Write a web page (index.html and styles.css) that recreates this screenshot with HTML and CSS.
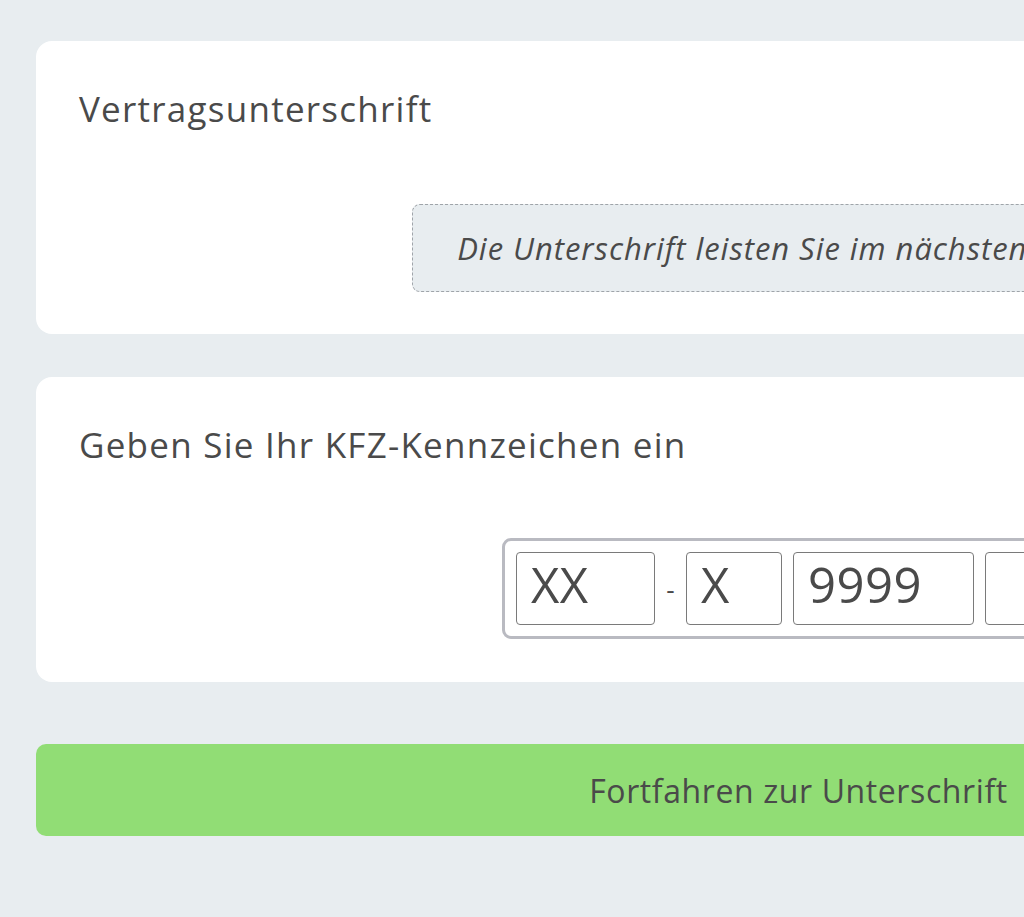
FILE: index.html
```html
<!DOCTYPE html>
<html lang="de">
<head>
    <meta charset="UTF-8">
    <meta name="viewport" content="width=device-width, initial-scale=1.0">
    <title>Vertragsunterschrift</title>
    <link rel="stylesheet" href="styles.css">
</head>
<body>
    <div class="page">
        <div class="card card-signature">
            <h2>Vertragsunterschrift</h2>
            <div class="sign-row">
                <div class="sign-hint">Die Unterschrift leisten Sie im nächsten Schritt.</div>
            </div>
        </div>

        <div class="card card-plate">
            <h2>Geben Sie Ihr KFZ-Kennzeichen ein</h2>
            <div class="plate-row">
                <div class="plate">
                    <input type="text" class="plate-city" placeholder="XX" maxlength="3">
                    <span class="plate-dash">-</span>
                    <input type="text" class="plate-letters" placeholder="X" maxlength="2">
                    <input type="text" class="plate-number" placeholder="9999" maxlength="4">
                    <input type="text" class="plate-suffix" maxlength="1">
                </div>
            </div>
        </div>

        <button type="button" class="continue-btn">Fortfahren zur Unterschrift</button>
    </div>
</body>
</html>
```

FILE: styles.css
```css
html, body {
    margin: 0;
    padding: 0;
    overflow: hidden;
}
body {
    font-family: "Open Sans", "Liberation Sans", sans-serif;
    background-color: #e8edf0;
    color: #4a4a4a;
}
.page {
    width: 1525px;
    margin-left: 36px;
    padding-top: 41px;
}
.card {
    background-color: #fff;
    border-radius: 16px;
    padding: 44px 43px 42px;
    margin-bottom: 43px;
}
.card h2 {
    margin: 0;
    font-size: 35px;
    font-weight: 400;
    line-height: 48px;
    letter-spacing: 1.25px;
}
.sign-row {
    display: flex;
    justify-content: center;
    margin-top: 71px;
}
.sign-hint {
    background-color: #e8edf0;
    border: 1.5px dashed #9fa4a9;
    border-radius: 8px;
    padding: 23px 44px 22px;
    font-size: 31px;
    font-style: italic;
    line-height: 41px;
    letter-spacing: 0.95px;
    white-space: nowrap;
}
.card-plate {
    padding-bottom: 43px;
    margin-bottom: 62px;
}
.plate-row {
    display: flex;
    justify-content: center;
    margin-top: 69px;
}
.plate {
    display: flex;
    align-items: center;
    gap: 11px;
    padding: 11px;
    border: 3px solid #b9bac1;
    border-radius: 9px;
}
.plate input {
    box-sizing: border-box;
    height: 73px;
    margin: 0;
    padding: 0 14px 10px;
    border: 1.5px solid #7a7a7a;
    border-radius: 4px;
    font-family: "Open Sans", "Liberation Sans", sans-serif;
    font-size: 49px;
    letter-spacing: 0.5px;
    color: #4a4a4a;
    background: #fff;
}
.plate input::placeholder {
    color: #4a4a4a;
    opacity: 1;
}
.plate-city {
    width: 139px;
}
.plate-letters, .plate-suffix {
    width: 96px;
}
.plate-number {
    width: 181px;
}
.plate-dash {
    width: 9px;
    text-align: center;
    font-size: 26px;
}
.continue-btn {
    display: block;
    width: 100%;
    height: 92px;
    border: none;
    border-radius: 10px;
    background-color: #91dd75;
    color: #4a4a4a;
    font-family: "Open Sans", "Liberation Sans", sans-serif;
    font-size: 32px;
    letter-spacing: 0.6px;
    cursor: pointer;
}
```
